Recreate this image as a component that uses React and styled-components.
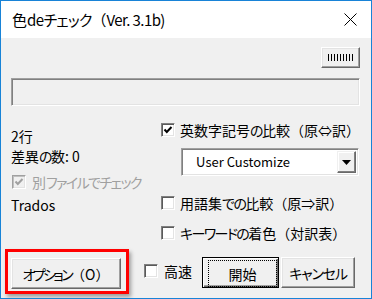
import React from 'react';
import styled, { createGlobalStyle, css } from 'styled-components';

const Global = createGlobalStyle`
  html, body { margin: 0; padding: 0; background: #ffffff; }
  body { font-family: "Noto Sans CJK JP", "Noto Sans", sans-serif; }
  * { box-sizing: border-box; }
`;

const raised = css`
  background: #f0f0f0;
  border: 1px solid;
  border-color: #ffffff #696969 #696969 #ffffff;
  box-shadow: inset -1px -1px 0 #a0a0a0, inset 1px 1px 0 #e3e3e3;
`;

const sunken = css`
  border: 1px solid;
  border-color: #a0a0a0 #ffffff #ffffff #a0a0a0;
  box-shadow: inset 1px 1px 0 #808080, inset -1px -1px 0 #e3e3e3;
`;

/* proportional kana run, narrowed to the MS UI Gothic widths */
const P = styled.span`
  font-feature-settings: "palt";
  letter-spacing: ${p => p.$ls ?? -1.6}px;
`;

const Window = styled.div`
  width: 372px;
  height: 299px;
  border: 1px solid #1883d7;
  display: flex;
  flex-direction: column;
  background: #f0f0f0;
  overflow: hidden;
`;

const TitleBar = styled.div`
  height: 37px;
  flex: none;
  background: #ffffff;
  display: flex;
  align-items: center;
  justify-content: space-between;
  padding: 0 14px 0 11px;
`;

const Title = styled.span`
  font-size: 15px;
  line-height: 20px;
  color: #000;
  white-space: nowrap;
`;

const Latin = styled.span`
  letter-spacing: -0.6px;
`;

const Body = styled.div`
  flex: 1;
  padding: 9px 11px 0 10px;
  display: flex;
  flex-direction: column;
  font-size: 14px;
  color: #000;
`;

const TopRow = styled.div`
  display: flex;
  justify-content: flex-end;
`;

const GripButton = styled.div`
  ${raised};
  width: 39px;
  height: 21px;
  display: flex;
  align-items: center;
  justify-content: center;
`;

const Field = styled.div`
  ${sunken};
  margin-top: 10px;
  height: 28px;
  background: #f0f0f0;
`;

const Middle = styled.div`
  display: flex;
`;

const LeftCol = styled.div`
  width: 151px;
  display: flex;
  flex-direction: column;
  padding-top: 20px;
`;

const RightCol = styled.div`
  flex: 1;
  display: flex;
  flex-direction: column;
  padding-top: 14px;
`;

const Line = styled.div`
  height: 20px;
  line-height: 20px;
  white-space: nowrap;
  margin-top: ${p => p.$mt || 0}px;
  color: ${p => (p.$disabled ? '#a0a0a0' : '#000')};
`;

const CheckRow = styled.div`
  display: flex;
  align-items: center;
  gap: ${p => p.$gap ?? 5}px;
  height: 20px;
  margin-top: ${p => p.$mt || 0}px;
  margin-left: ${p => p.$ml || 0}px;
`;

const Label = styled.span`
  line-height: 20px;
  white-space: nowrap;
  color: ${p => (p.$disabled ? '#a0a0a0' : '#000')};
`;

const Box = styled.span`
  width: 14px;
  height: 14px;
  flex: none;
  display: flex;
  align-items: center;
  justify-content: center;
  border: 1px solid;
  border-color: ${p => (p.$disabled ? '#a0a0a0 #ffffff #ffffff #a0a0a0' : '#808080 #ffffff #ffffff #808080')};
  box-shadow: ${p => (p.$disabled ? 'inset 1px 1px 0 #c0c0c0, inset -1px -1px 0 #e3e3e3' : 'inset 1px 1px 0 #5a5a5a, inset -1px -1px 0 #e3e3e3')};
  background: ${p => (p.$disabled ? '#f0f0f0' : '#ffffff')};
`;

const Select = styled.div`
  ${sunken};
  margin-top: 8px;
  margin-left: 20px;
  width: 178px;
  height: 28px;
  background: #ffffff;
  display: flex;
  align-items: stretch;
  padding: 2px;
`;

const SelectText = styled.span`
  flex: 1;
  padding-left: 12px;
  font-size: 13px;
  line-height: 22px;
  white-space: nowrap;
`;

const ArrowButton = styled.span`
  ${raised};
  border-color: #f0f0f0 #696969 #696969 #f0f0f0;
  box-shadow: inset -1px -1px 0 #808080, inset 1px 1px 0 #ffffff;
  width: 19px;
  display: flex;
  align-items: center;
  justify-content: center;
`;

const BottomRow = styled.div`
  display: flex;
  align-items: flex-start;
  margin-top: 6px;
`;

const Highlight = styled.div`
  margin-left: -6px;
  border: 3px solid #ff0000;
  padding: 6px 5px 2px 3px;
  box-shadow: 2px 3px 4px rgba(0, 0, 0, 0.35);
`;

const PushButton = styled.div`
  ${raised};
  width: ${p => p.$w}px;
  height: 31px;
  margin-top: ${p => p.$mt || 0}px;
  margin-left: ${p => p.$ml || 0}px;
  display: flex;
  align-items: center;
  justify-content: center;
  font-size: 14px;
  line-height: 20px;
  white-space: nowrap;
  ${p => p.$default && css`
    border: 1px solid #000;
    box-shadow: inset 1px 1px 0 #ffffff, inset -1px -1px 0 #696969, inset -2px -2px 0 #a0a0a0;
    padding: 2px 1px 0 5px;
  `}
`;

const Focus = styled.span`
  flex: 1;
  align-self: stretch;
  border: 1px dotted #000;
  display: flex;
  align-items: center;
  justify-content: center;
`;

const Check = ({ color = '#000' }) => (
  <svg width="10" height="10" viewBox="0 0 10 10">
    <polyline points="1.5,4.5 3.8,7 8.5,2" fill="none" stroke={color} strokeWidth="2" />
  </svg>
);

const CheckBox = ({ checked, disabled }) => (
  <Box $disabled={disabled}>{checked && <Check color={disabled ? '#a0a0a0' : '#000'} />}</Box>
);

export default function App() {
  return (
    <>
      <Global />
      <Window>
        <TitleBar>
          <Title>色<Latin>de</Latin><P $ls={-0.8}>チェック</P>（<Latin>Ver. 3.1b)</Latin></Title>
          <svg width="13" height="13" viewBox="0 0 13 13">
            <path d="M0.5 0.5 L12.5 12.5 M12.5 0.5 L0.5 12.5" stroke="#000" strokeWidth="1" />
          </svg>
        </TitleBar>
        <Body>
          <TopRow>
            <GripButton>
              <svg width="25" height="7" viewBox="0 0 25 7">
                {Array.from({ length: 9 }).map((_, i) => (
                  <rect key={i} x={i * 3} y="0" width="1" height="7" fill="#000" />
                ))}
              </svg>
            </GripButton>
          </TopRow>
          <Field />
          <Middle>
            <LeftCol>
              <Line>2行</Line>
              <Line>差異<P>の</P>数: 0</Line>
              <CheckRow $mt={6} $ml={1} $gap={6}>
                <CheckBox checked disabled />
                <Label $disabled>別<P>ファイルでチェック</P></Label>
              </CheckRow>
              <Line $mt={3}>Trados</Line>
            </LeftCol>
            <RightCol>
              <CheckRow>
                <CheckBox checked />
                <Label>英数字記号<P>の</P>比較（原⇔訳）</Label>
              </CheckRow>
              <Select>
                <SelectText>User Customize</SelectText>
                <ArrowButton>
                  <svg width="9" height="5" viewBox="0 0 9 5">
                    <polygon points="0,0 9,0 4.5,5" fill="#000" />
                  </svg>
                </ArrowButton>
              </Select>
              <CheckRow $mt={17}>
                <CheckBox />
                <Label>用語集<P>での</P>比較（原⇒訳）</Label>
              </CheckRow>
              <CheckRow $mt={10}>
                <CheckBox />
                <Label><P>キーワードの</P>着色（対訳表）</Label>
              </CheckRow>
            </RightCol>
          </Middle>
          <BottomRow>
            <Highlight>
              <PushButton $w={110}><P $ls={-2.6}>オプション</P>（O）</PushButton>
            </Highlight>
            <CheckRow $mt={12} $ml={15} $gap={6}>
              <CheckBox />
              <Label>高速</Label>
            </CheckRow>
            <PushButton $w={77} $mt={8} $ml={10} $default>
              <Focus>開始</Focus>
            </PushButton>
            <PushButton $w={74} $mt={8} $ml={2}><P $ls={-1.2}>キャンセル</P></PushButton>
          </BottomRow>
        </Body>
      </Window>
    </>
  );
}
